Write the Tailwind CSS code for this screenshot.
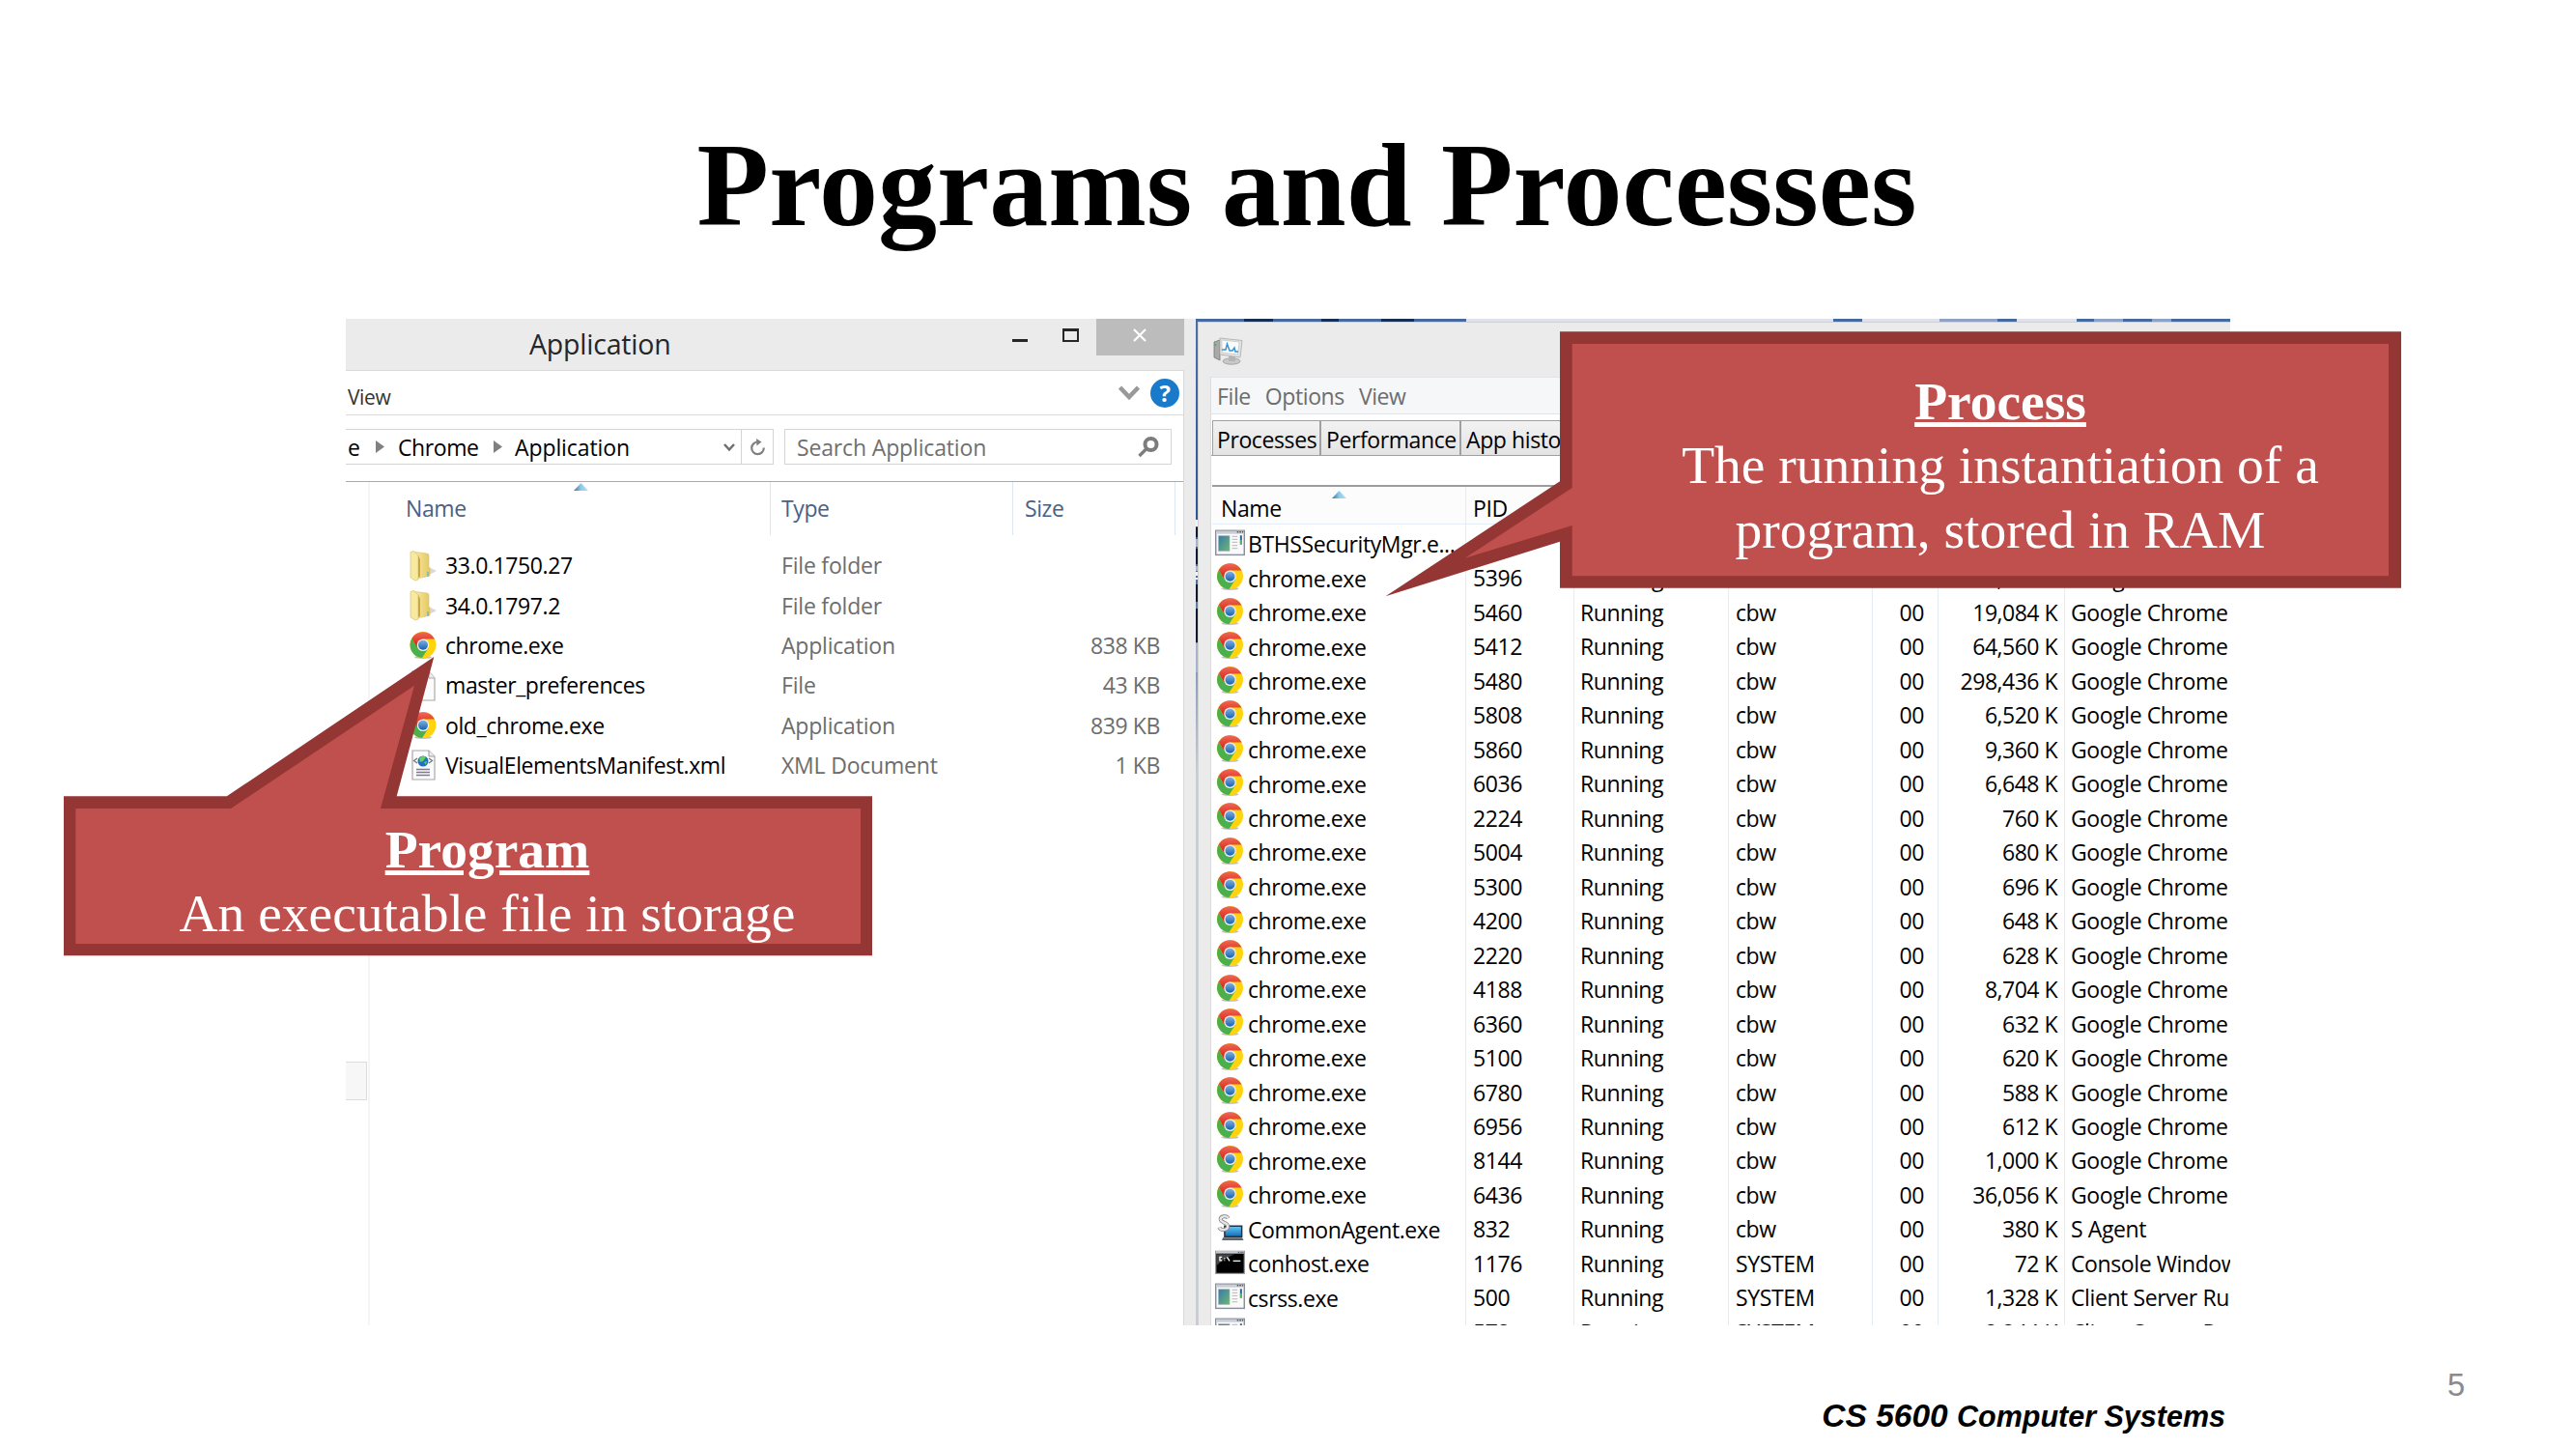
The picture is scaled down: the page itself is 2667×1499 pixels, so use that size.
<!DOCTYPE html>
<html lang="en">
<head>
<meta charset="utf-8">
<title>Programs and Processes</title>
<script src="https://cdn.jsdelivr.net/npm/@tailwindcss/browser@4"></script>
</head>
<body class="bg-white">
<svg class="absolute size-0">
  <defs>
    <linearGradient id="gr" x1="0" y1="0" x2="0" y2="1"><stop offset="0" stop-color="#ee6a55"/><stop offset="1" stop-color="#d8150f"/></linearGradient>
    <linearGradient id="gb" x1="0" y1="0" x2="0" y2="1"><stop offset="0" stop-color="#7fb0e2"/><stop offset="1" stop-color="#1460b0"/></linearGradient>
    <linearGradient id="gf" x1="0" y1="0" x2="1" y2="0"><stop offset="0" stop-color="#fbf0b4"/><stop offset="1" stop-color="#e3c75e"/></linearGradient>
    <linearGradient id="gw" x1="0" y1="0" x2="1" y2="1"><stop offset="0" stop-color="#3a78ae"/><stop offset="1" stop-color="#69b96f"/></linearGradient>
    <linearGradient id="gs" x1="0" y1="0" x2="0" y2="1"><stop offset="0" stop-color="#6cc5f4"/><stop offset="1" stop-color="#0c6db8"/></linearGradient>
    <linearGradient id="ga" x1="0" y1="0" x2="1" y2="0"><stop offset="0" stop-color="#3d7498"/><stop offset=".5" stop-color="#8fcbea"/><stop offset="1" stop-color="#b5dff2"/></linearGradient>
  </defs>
  <symbol id="chrome" viewBox="0 0 28 28">
    <ellipse cx="14" cy="26.4" rx="9" ry="1.5" fill="#000" opacity=".25"/>
    <circle cx="14" cy="13.6" r="13.5" fill="#ffd40c"/>
    <path d="M2.3 6.9 A13.5 13.5 0 0 0 13 27.1 L19.8 16.5 L14 13.6 L8.3 16.5 Z" fill="#4bb04b"/>
    <path d="M2.3 6.9 A13.5 13.5 0 0 1 26 7.5 L14 7.5 L8.4 13 L8.3 16.8 Z" fill="url(#gr)"/>
    <circle cx="14" cy="13.8" r="6.3" fill="#eef0ee"/>
    <circle cx="14" cy="13.8" r="5" fill="url(#gb)"/>
  </symbol>
  <symbol id="folder" viewBox="0 0 28 32">
    <path d="M15 28 L28 21 L20 17 Z" fill="#000" opacity=".15"/>
    <path d="M3 1 L18 3 Q20 3 20 5 V17 L21 18 V26 L8 29 Z" fill="url(#gf)" stroke="#dcc36a" stroke-width=".6"/>
    <path d="M1 1.500 L4 .5 L9 5 V30 L6 31 L1 28 Z" fill="#f7e9a0" stroke="#dcc36a" stroke-width=".7"/>
    <path d="M9 5 V28 L11 27 V9 Z" fill="#c9a842"/>
    <path d="M19 22v5" stroke="#5fb4d8" stroke-width="1.300"/>
  </symbol>
  <symbol id="page" viewBox="0 0 28 32">
    <path d="M3 1 H20 L26 8 V31 H3 Z" fill="#fbfbfb" stroke="#aaa" stroke-width="1.200"/><path d="M20 1 V8 H26" fill="#eee" stroke="#aaa"/>
  </symbol>
  <symbol id="xml" viewBox="0 0 28 32">
    <path d="M3 1 H20 L26 7 V31 H3 Z" fill="#fbfbfb" stroke="#a8a8a8" stroke-width="1.200"/><path d="M20 1 V7 H26" fill="#eee" stroke="#999"/>
    <path d="M8 9 L4.500 11.500 L8 14 M20 9 L23.500 11.500 L20 14" fill="none" stroke="#777" stroke-width="1.300"/>
    <circle cx="14" cy="12" r="5.500" fill="#1f6fc4"/><path d="M10 9 Q14 5 17 8 L14 12 L11 13 Z M15 13 L18 12 L17 16 Z" fill="#5fd35a"/>
    <path d="M7 20.500h14M7 23.500h14M7 26.500h14" stroke="#7f7a8c" stroke-width="1.300"/>
  </symbol>
  <symbol id="app" viewBox="0 0 30 26">
    <rect x=".7" y=".7" width="28.600" height="24.300" fill="#fafafa" stroke="#8b8f99" stroke-width="1.400"/>
    <rect x="1.200" y="1" width="27.600" height="3" fill="#c9ced8"/><path d="M22 2.200h1.500M24.500 2.200h1.500M27 2.200h1.200" stroke="#555" stroke-width="1.500"/>
    <rect x="3.500" y="6" width="11" height="15" fill="url(#gw)" stroke="#9aa" stroke-width=".6"/>
    <path d="M17 6.500h5.500M17 9.500h5.500M17 12.500h5.500M17 15.500h5.500M17 18.500h5.500" stroke="#c4c4c4" stroke-width="1.200"/>
    <rect x="25" y="5.500" width="2" height="9" fill="#2e6a90"/><rect x="25" y="10" width="2" height="4.500" fill="#58b46a"/>
  </symbol>
  <symbol id="con" viewBox="0 0 30 26">
    <rect x=".7" y="1.700" width="28.600" height="22.300" fill="#000" stroke="#999" stroke-width="1.200"/>
    <rect x="1" y="1.500" width="28" height="2.500" fill="#c5cad3"/><path d="M23 2.700h1.300M25.500 2.700h1.300M27.500 2.700h1" stroke="#555" stroke-width="1.300"/>
    <path d="M1.500 4.500H20Q10 8 1.500 16Z" fill="#454545"/>
    <path d="M7 7.500H4.800V11H7M9.500 8.500v.8M9.500 10.500v.8M12 7.500l2.500 4M18 11.500h7.500" fill="none" stroke="#fff" stroke-width="1.300"/>
  </symbol>
  <symbol id="agent" viewBox="0 0 30 30">
    <path d="M9 13 H28 V25 H9 Z" fill="url(#gs)" stroke="#2a3138" stroke-width="1.600"/>
    <path d="M7 26 H28.500 L30 29 H6 Z" fill="#5d656d"/>
    <path d="M13 4.500 C11 1 4 2 4.500 6 C5 9.500 12 9 12.500 13 C13 17.500 5 19 3 14.500" fill="none" stroke="#888" stroke-width="4.200"/>
    <path d="M13 4.500 C11 1 4 2 4.500 6 C5 9.500 12 9 12.500 13 C13 17.500 5 19 3 14.500" fill="none" stroke="#e6e6e6" stroke-width="2.400"/>
  </symbol>
</svg>

<main class="relative h-[1499px] w-[2667px] overflow-hidden bg-white font-['Open_Sans',sans-serif] text-[23px] tracking-[-0.4px] text-black">
  <h1 class="pl-[39px] pt-[122px] text-center font-['Liberation_Serif',serif] text-[122px] font-bold leading-[140px] tracking-normal">Programs and Processes</h1>

  <div class="ml-[358px] mt-[68px] flex h-[1042px] w-[1951px] overflow-hidden whitespace-nowrap">
    <!-- File explorer -->
    <section class="flex w-[880px] shrink-0 flex-col bg-[#ebebeb]">
      <div class="flex h-[53px] shrink-0 items-start pr-[12px]">
        <div class="pl-[190px] text-[28.5px] leading-[52px] tracking-[-0.2px] text-[#262626]">Application</div>
        <div class="ml-auto mt-[21px] h-[3px] w-[16px] bg-[#262626]"></div>
        <div class="ml-[36px] mt-[10px] h-[14px] w-[17px] border-2 border-t-3 border-[#262626]"></div>
        <div class="ml-[18px] flex h-[38px] w-[91px] items-center justify-center bg-[#bcbcbc]">
          <svg class="mr-[2px] mt-[-4px] size-[14px]" viewBox="0 0 14 14"><path d="M1 1L13 13M13 1L1 13" stroke="#fff" stroke-width="2.200"/></svg>
        </div>
      </div>
      <div class="flex grow flex-col border-r border-[#d9d9d9] bg-white mr-[12px]">
        <div class="flex h-[47px] shrink-0 items-center border-y border-[#d9d9d9] pl-[2px] pr-[4px] text-[21px] text-[#333]">
          <span class="pt-[10px]">View</span>
          <svg class="ml-auto mr-[11px] h-[16px] w-[22px]" viewBox="0 0 22 16"><path d="M1.500 2L11 12L20.500 2" fill="none" stroke="#999" stroke-width="4.500"/></svg>
          <div class="flex size-[30px] items-center justify-center rounded-full bg-[#1979ca] text-[24px] font-bold text-white">?</div>
        </div>
        <div class="flex h-[69px] shrink-0 border-b border-[#aaa] pt-[14px] pr-[12px]">
          <div class="flex h-[37px] w-[443px] items-center border-y border-r border-[#d4d4d4] pl-[2px]">
            <span class="w-[29px] pt-[2px]">e</span>
            <svg class="h-[13px] w-[9px]" viewBox="0 0 9 13"><path d="M0 0L9 6.500L0 13Z" fill="#808080"/></svg>
            <span class="ml-[14px] w-[99px] pt-[2px]">Chrome</span>
            <svg class="h-[13px] w-[9px]" viewBox="0 0 9 13"><path d="M0 0L9 6.500L0 13Z" fill="#808080"/></svg>
            <span class="ml-[13px] pt-[2px] tracking-[-0.1px]">Application</span>
            <svg class="ml-auto mr-[6px] h-[10px] w-[12px]" viewBox="0 0 12 10"><path d="M1 2L6 7.500L11 2" fill="none" stroke="#6e6e6e" stroke-width="2.500"/></svg>
            <div class="flex h-full w-[33px] items-center justify-center border-l border-[#d4d4d4]">
              <svg class="size-[18px]" viewBox="0 0 18 18"><path d="M10 3.500A6.300 6.300 0 1 0 15.800 9.500" fill="none" stroke="#808080" stroke-width="2.200"/><path d="M8 0L13.500 3.500L8.500 7.500Z" fill="#808080"/></svg>
            </div>
          </div>
          <div class="ml-[11px] flex h-[37px] w-[401px] items-center border border-[#d4d4d4] pl-[12px] pr-[12px] text-[#707070]">
            <span class="pt-[2px] tracking-[-0.15px]">Search Application</span>
            <svg class="ml-auto size-[22px]" viewBox="0 0 22 22"><circle cx="13.500" cy="8" r="6" fill="none" stroke="#7d7d7d" stroke-width="4"/><path d="M9 12.500L1.500 20" stroke="#7d7d7d" stroke-width="3.400"/></svg>
          </div>
        </div>
        <div class="flex grow">
          <div class="w-[25px] shrink-0 border-r-2 border-[#f5f5f5] pt-[600px]">
            <div class="h-[40px] w-[22px] border border-l-0 border-[#dcdcdc] bg-[#f7f7f7]"></div>
          </div>
          <div class="relative grow">
            <svg class="absolute left-[211px] top-[1px] h-[8px] w-[15px]" viewBox="0 0 15 8"><path d="M0 8L7.500 0L15 8Z" fill="url(#ga)"/></svg>
            <div class="grid h-[46px] grid-cols-[415px_251px_168px] text-[#4a6184]">
              <span class="border-r border-[#dbe7f3] pl-[37px] leading-[55px]">Name</span>
              <span class="border-r border-[#dbe7f3] pl-[11px] leading-[55px]">Type</span>
              <span class="border-r border-[#dbe7f3] pl-[12px] leading-[55px]">Size</span>
            </div>
            <div id="files" class="pt-[20px]"></div>
          </div>
        </div>
      </div>
    </section>

    <!-- Task manager over a sliver of desktop wallpaper -->
    <section class="relative flex grow flex-col bg-linear-to-b from-[#4a70a8] from-0% via-[#2d5590] via-[20%] to-[#c8ccd4] to-[45%] pl-[2px] pt-[3px]">
      <svg class="absolute left-0 top-0 h-[1042px] w-[1071px]" viewBox="0 0 1071 1042">
        <path d="M1 208v7M1 262v4M1 268v2" stroke="#f2f4f8" stroke-width="2"/>
        <path d="M1 216v10M1 238v16M1 275v18M1 300v35" stroke="#10182c" stroke-width="2"/>
        <path d="M1 228v8M1 256v5M1 336v30" stroke="#a9b3cc" stroke-width="2"/>
        <path d="M0 1.500H1071" stroke="#46699f" stroke-width="3"/>
        <path d="M50 1.500h30M130 1.500h18M192 1.500h34" stroke="#182d52" stroke-width="3"/>
        <path d="M280 1.500H660M690 1.500h80M850 1.500h62" stroke="#dfe2ec" stroke-width="3"/>
        <path d="M770 1.500h60M930 1.500h30M990 1.500h20" stroke="#8ea2c4" stroke-width="3"/>
      </svg>
      <div class="relative flex grow flex-col border-l border-t border-[#d0d0d0] bg-[#ebebeb] pl-[12px]">
        <div class="h-[56px] shrink-0 pl-[3px] pt-[15px]">
          <svg class="h-[29px] w-[31px]" viewBox="0 0 31 29">
            <path d="M1 5L7 3V24L1 21Z" fill="#a9a9a9" stroke="#777" stroke-width=".8"/><circle cx="2.500" cy="8" r="1" fill="#3dbb3d"/>
            <ellipse cx="19" cy="25" rx="9" ry="3.200" fill="#c9c9c9" stroke="#999" stroke-width=".8"/><path d="M16 20h7v5h-7z" fill="#b5b5b5"/>
            <path d="M7 1L30 3.500L28 21L7 18Z" fill="#e3e3e3" stroke="#aaa" stroke-width=".8"/>
            <path d="M9 3L27 5L25.500 18L9 16Z" fill="#f8fcff" stroke="#bbb" stroke-width=".6"/>
            <path d="M9 13L13 13L14.500 7L17 14L20 14L22 11L23 15H26" fill="none" stroke="#3a94d0" stroke-width="1.500"/>
          </svg>
        </div>
        <div class="flex grow flex-col border-l border-[#d9dde2] bg-white">
          <div class="flex h-[39px] shrink-0 items-center gap-[15px] border-y border-[#e0e3e8] bg-[#f5f7f9] pl-[6px] pt-[2px] text-[#6d6d6d]"><span>File</span><span>Options</span><span>View</span></div>
          <div class="mt-[6px] flex h-[37px] shrink-0 border-b border-[#a0a0a0] pl-[1px]">
            <div class="w-[112px] border-x border-t border-[#a0a0a0] bg-linear-to-b from-[#f2f2f2] to-[#e4e4e4] pl-[4px] leading-[39px]">Processes</div>
            <div class="w-[145px] border-x border-t border-[#a0a0a0] bg-linear-to-b from-[#f2f2f2] to-[#e4e4e4] pl-[5px] leading-[39px]">Performance</div>
            <div class="w-[132px] border-x border-t border-[#a0a0a0] bg-linear-to-b from-[#f2f2f2] to-[#e4e4e4] pl-[5px] leading-[39px]">App history</div>
          </div>
          <div class="relative ml-[1px] mt-[30px] flex grow flex-col border-t-2 border-[#9c9c9c]">
            <svg class="absolute left-[124px] top-[4px] h-[8px] w-[15px]" viewBox="0 0 15 8"><path d="M0 8L7.500 0L15 8Z" fill="url(#ga)"/></svg>
            <div class="grid h-[39px] shrink-0 grid-cols-[263px_112px] border-b border-[#e3edf9] bg-[#fcfcfc] leading-[44px]"><span class="border-r border-[#e3edf9] pl-[9px]">Name</span><span class="pl-[7px]">PID</span></div>
            <div id="procs" class="pt-[1px]"></div>
          </div>
        </div>
      </div>
    </section>
  </div>

  <div class="mt-[45.6px] pr-[115px] text-right font-['Liberation_Sans',sans-serif] text-[33px] leading-[32px] tracking-normal text-[#8b8b8b]">5</div>
  <footer class="pr-[363px] text-right font-['Liberation_Sans',sans-serif] text-[30.5px] font-bold italic leading-[32px] tracking-normal"><span class="text-[33.5px]">CS 5600 </span>Computer Systems</footer>

  <!-- Callouts -->
  <svg class="absolute left-0 top-0 h-[1499px] w-[2667px]" viewBox="0 0 2667 1499">
    <path d="M66 824.300H234.800L449.300 680L410.700 824.300H903V989.300H66Z" fill="#943634"/>
    <path d="M78.300 837H239L429 709.700L394 837H891V977H78.300Z" fill="#c0504d"/>
    <path d="M1615 343.300H2486V608.700H1615V560.700L1434.500 617.300L1615 498.300Z" fill="#943634"/>
    <path d="M1627.700 356H2473V596.300H1627.700V544L1516.700 577.700L1627.700 505Z" fill="#c0504d"/>
  </svg>
  <div class="absolute left-[66px] top-[824px] w-[837px] pl-[40px] pt-[23px] text-center font-['Liberation_Serif',serif] text-[55.5px] leading-[66.4px] tracking-normal text-white">
    <div class="font-bold underline">Program</div><div>An executable file in storage</div>
  </div>
  <div class="absolute left-[1615px] top-[343px] w-[871px] pl-[41px] pt-[40px] text-center font-['Liberation_Serif',serif] text-[55.5px] leading-[66.4px] tracking-normal text-white">
    <div class="font-bold underline">Process</div><div>The running instantiation of a<br>program, stored in RAM</div>
  </div>
</main>

<script>
const files = [
  ['folder','33.0.1750.27','File folder',''],
  ['folder','34.0.1797.2','File folder',''],
  ['chrome','chrome.exe','Application','838 KB'],
  ['page','master_preferences','File','43 KB'],
  ['chrome','old_chrome.exe','Application','839 KB'],
  ['xml','VisualElementsManifest.xml','XML Document','1 KB'],
];
document.getElementById('files').innerHTML = files.map(([i,n,t,s]) => `
  <div class="grid h-[41.33px] grid-cols-[415px_251px_168px] items-center text-[#6d6d6d]">
    <div class="flex items-center pl-[41px] text-black"><svg class="h-[32px] w-[28px]"><use href="#${i}"/></svg><span class="ml-[9px]">${n}</span></div>
    <span class="pl-[11px] tracking-[-0.2px]">${t}</span><span class="pr-[16px] text-right">${s}</span>
  </div>`).join('');

const chrome = [['5396','22,480'],['5460','19,084'],['5412','64,560'],['5480','298,436'],['5808','6,520'],['5860','9,360'],['6036','6,648'],['2224','760'],['5004','680'],['5300','696'],['4200','648'],['2220','628'],['4188','8,704'],['6360','632'],['5100','620'],['6780','588'],['6956','612'],['8144','1,000'],['6436','36,056']];
const procs = [
  ['app','BTHSSecurityMgr.e...','','Running','cbw','1,200','BTHSSecurityMgr'],
  ...chrome.map(([p,m]) => ['chrome','chrome.exe',p,'Running','cbw',m,'Google Chrome']),
  ['agent','CommonAgent.exe','832','Running','cbw','380','S Agent'],
  ['con','conhost.exe','1176','Running','SYSTEM','72','Console Window Host'],
  ['app','csrss.exe','500','Running','SYSTEM','1,328','Client Server Runtime Process'],
  ['app','csrss.exe','572','Running','SYSTEM','2,244','Client Server Runtime Process'],
];
document.getElementById('procs').innerHTML = procs.map(([i,n,p,s,u,m,d]) => `
  <div class="grid h-[35.48px] grid-cols-[263px_112px_160px_149px_68px_131px_172px] leading-[38px] *:h-[35.48px] *:border-r *:border-[#e3edf9]">
    <div class="flex items-center pl-[3px]"><svg class="h-[28px] w-[31px]"><use href="#${i}"/></svg><span class="ml-[3px] pt-[3px]">${n}</span></div>
    <span class="pl-[7px]">${p}</span><span class="pl-[6px]">${s}</span><span class="pl-[7px]">${u}</span>
    <span class="pr-[14px] text-right">00</span><span class="pr-[7px] text-right tracking-[-0.5px]">${m} K</span><span class="pl-[6px]">${d}</span>
  </div>`).join('');
</script>
</body>
</html>
